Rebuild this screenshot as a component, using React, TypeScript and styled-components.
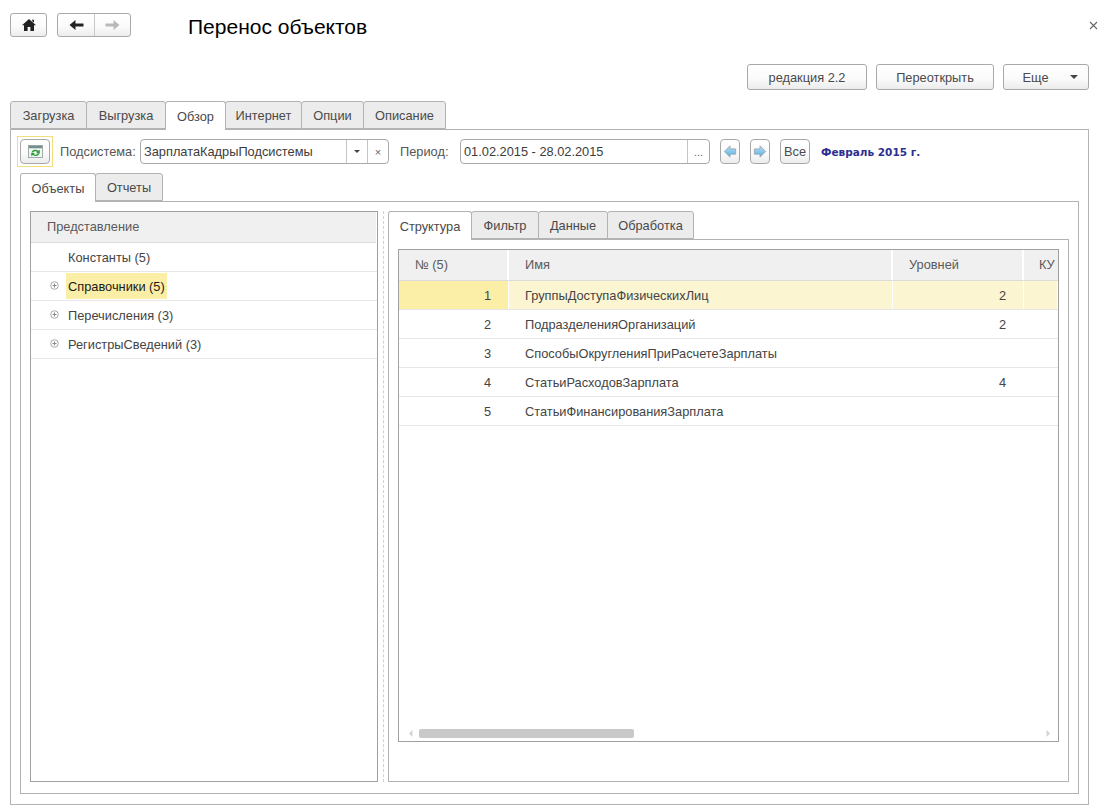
import React from "react";
import styled, { createGlobalStyle } from "styled-components";

const Global = createGlobalStyle`
  html, body { margin: 0; padding: 0; background: #fff; }
  body { font-family: "Liberation Sans", Arial, sans-serif; font-size: 12.8px; color: #4a4a4a; }
  * { box-sizing: border-box; }
`;

const Page = styled.div`
  width: 1105px;
  height: 812px;
  padding: 13px 16px 0 10px;
  display: flex;
  flex-direction: column;
  overflow: hidden;
`;
const TopBar = styled.div`
  display: flex;
  align-items: center;
  height: 24px;
  margin-right: -10px;
`;
const buttonSkin = `
  background: linear-gradient(#ffffff, #fbfbfb 55%, #ececec);
  border: 1px solid #a9a9a9;
  border-radius: 3px;
`;
const NavGroup = styled.div<{ $ml?: number }>`
  ${buttonSkin}
  display: flex;
  height: 24px;
  margin-left: ${(p) => p.$ml ?? 0}px;
`;
const NavCell = styled.div<{ $w: number; $divided?: boolean }>`
  width: ${(p) => p.$w}px;
  display: flex;
  align-items: center;
  justify-content: center;
  border-left: ${(p) => (p.$divided ? "1px solid #c9c9c9" : "none")};
`;
const Title = styled.h1`
  margin: 3px 0 0 57px;
  font-size: 21px;
  font-weight: 400;
  color: #000;
  line-height: 28px;
`;
const Close = styled.div`
  margin-left: auto;
  width: 11px;
  height: 11px;
  display: flex;
  align-items: center;
  justify-content: center;
  margin-top: 1px;
`;
const ActionBar = styled.div`
  display: flex;
  justify-content: flex-end;
  gap: 9px;
  margin-top: 27px;
  height: 26px;
`;
const ActionButton = styled.div<{ $w: number }>`
  ${buttonSkin}
  width: ${(p) => p.$w}px;
  height: 26px;
  display: flex;
  align-items: center;
  justify-content: center;
  color: #4a4a4a;
  gap: 21px;
`;
const Caret = styled.span`
  width: 0;
  height: 0;
  border-left: 4px solid transparent;
  border-right: 4px solid transparent;
  border-top: 4px solid #444;
  margin-right: -8px;
`;
const TabRow = styled.div<{ $mt?: number; $h: number }>`
  display: flex;
  height: ${(p) => p.$h}px;
  margin-top: ${(p) => p.$mt ?? 0}px;
  flex: none;
`;
const Tab = styled.div<{ $w: number; $active?: boolean }>`
  width: ${(p) => p.$w}px;
  margin-right: -1px;
  height: ${(p) => (p.$active ? "calc(100% + 1px)" : "100%")};
  display: flex;
  align-items: center;
  justify-content: center;
  background: ${(p) => (p.$active ? "#fff" : "#ececec")};
  border: 1px solid #b3b3b3;
  border-bottom: ${(p) => (p.$active ? "none" : "1px solid #b3b3b3")};
  border-radius: 3px 3px 0 0;
  color: #4a4a4a;
  position: relative;
  z-index: ${(p) => (p.$active ? 2 : 1)};
`;
const Panel = styled.div<{ $h: number; $pad: string }>`
  height: ${(p) => p.$h}px;
  padding: ${(p) => p.$pad};
  border: 1px solid #b3b3b3;
  background: #fff;
  display: flex;
  flex-direction: column;
  flex: none;
`;
const Toolbar = styled.div`
  display: flex;
  align-items: center;
  height: 31px;
  margin-left: -3px;
  flex: none;
`;
const Focus = styled.div`
  width: 36px;
  height: 31px;
  border: 1px solid #f3de7c;
  display: flex;
  align-items: center;
  justify-content: center;
`;
const IconButton = styled.div<{ $w: number; $ml?: number }>`
  ${buttonSkin}
  border-radius: 4px;
  width: ${(p) => p.$w}px;
  height: 25px;
  margin-left: ${(p) => p.$ml ?? 0}px;
  display: flex;
  align-items: center;
  justify-content: center;
  color: #4a4a4a;
  flex: none;
`;
const Label = styled.span<{ $ml: number; $w: number }>`
  margin-left: ${(p) => p.$ml}px;
  width: ${(p) => p.$w}px;
  flex: none;
  color: #555;
  white-space: nowrap;
`;
const Field = styled.div<{ $w: number }>`
  width: ${(p) => p.$w}px;
  height: 25px;
  border: 1px solid #a9a9a9;
  border-radius: 4px;
  display: flex;
  align-items: stretch;
  background: #fff;
  flex: none;
`;
const FieldValue = styled.div`
  flex: 1;
  display: flex;
  align-items: center;
  padding-left: 3px;
  color: #3c3c3c;
  white-space: nowrap;
`;
const FieldCell = styled.div<{ $w: number }>`
  width: ${(p) => p.$w}px;
  flex: none;
  border-left: 1px solid #c4c4c4;
  display: flex;
  align-items: center;
  justify-content: center;
  color: #666;
  font-size: 11px;
`;
const SmallCaret = styled.span`
  width: 0;
  height: 0;
  border-left: 3px solid transparent;
  border-right: 3px solid transparent;
  border-top: 3px solid #444;
`;
const Period = styled.span`
  margin-left: 11px;
  font-family: "DejaVu Sans", sans-serif;
  font-size: 10.5px;
  font-weight: 700;
  color: #2f2f8f;
  white-space: nowrap;
`;
const Split = styled.div`
  display: flex;
  flex: 1;
  min-height: 0;
`;
const TreeTable = styled.div`
  width: 348px;
  flex: none;
  border: 1px solid #a0a0a0;
  background: #fff;
`;
const TreeHead = styled.div`
  height: 31px;
  margin-right: 1px;
  padding: 0 0 2px 16px;
  background: #f0f0f0;
  border-bottom: 1px solid #dcdcdc;
  box-shadow: 0 1px 0 #fff;
  display: flex;
  align-items: center;
  color: #5a5a5a;
`;
const TreeRow = styled.div`
  height: 29px;
  border-bottom: 1px solid #e6e6e6;
  display: flex;
  align-items: center;
  position: relative;
  padding-left: 35px;
  color: #444;
`;
const Expander = styled.svg`
  position: absolute;
  left: 19px;
  top: 9px;
`;
const TreeText = styled.span<{ $current?: boolean }>`
  height: 26px;
  display: flex;
  align-items: center;
  padding: 0 2px;
  background: ${(p) => (p.$current ? "#fbeea6" : "transparent")};
  color: ${(p) => (p.$current ? "#1a1a1a" : "#444")};
`;
const Splitter = styled.div`
  width: 10px;
  flex: none;
  display: flex;
  justify-content: center;
`;
const DashLine = styled.div`
  width: 0;
  height: 100%;
  border-left: 1px dashed #d2d2d2;
  margin-left: 1px;
`;
const RightPane = styled.div`
  flex: 1;
  display: flex;
  flex-direction: column;
  min-width: 0;
`;
const DataTable = styled.div`
  flex: 1;
  border: 1px solid #a0a0a0;
  display: flex;
  flex-direction: column;
  overflow: hidden;
`;
const Columns = "110px 384px 131px 1fr";
const HeadRow = styled.div`
  display: grid;
  grid-template-columns: ${Columns};
  height: 31px;
  border-bottom: 1px solid #dcdcdc;
  flex: none;
`;
const HeadCell = styled.div`
  background: #f0f0f0;
  border-right: 2px solid #fff;
  display: flex;
  align-items: center;
  padding: 0 0 2px 16px;
  color: #5a5a5a;
  white-space: nowrap;
  overflow: hidden;
  &:last-child { border-right: none; padding-left: 15px; }
`;
const Row = styled.div<{ $selected?: boolean }>`
  display: grid;
  grid-template-columns: ${Columns};
  height: 29px;
  flex: none;
  border-bottom: 1px solid #e6e6e6;
  background: ${(p) => (p.$selected ? "#fcf5d2" : "#fff")};
`;
const Cell = styled.div<{ $right?: boolean; $current?: boolean }>`
  display: flex;
  align-items: center;
  justify-content: ${(p) => (p.$right ? "flex-end" : "flex-start")};
  padding: ${(p) => (p.$right ? "0 17px 0 0" : "0 0 0 16px")};
  background: ${(p) => (p.$current ? "#fbeea6" : "transparent")};
  border-right: 1px solid #fff;
  color: #444;
  white-space: nowrap;
`;
const RowsArea = styled.div`
  flex: 1;
  display: flex;
  flex-direction: column;
`;
const Scrollbar = styled.div`
  height: 13px;
  flex: none;
  display: flex;
  align-items: flex-start;
  padding-top: 1px;
`;
const ScrollArrow = styled.svg<{ $left: number }>`
  margin-left: ${(p) => p.$left}px;
  margin-top: 1px;
  flex: none;
`;
const Thumb = styled.div`
  width: 215px;
  height: 9px;
  margin-left: 6px;
  background: #c9c9c9;
  border-radius: 2px;
  flex: none;
`;

const ArrowIcon = ({ dir }: { dir: "left" | "right" }) => (
  <svg width="14" height="15" viewBox="0 0 16 16" style={dir === "right" ? { transform: "scaleX(-1)" } : undefined}>
    <defs>
      <linearGradient id={"blue" + dir} x1="0" y1="0" x2="0" y2="1">
        <stop offset="0" stopColor="#b4e0f6" />
        <stop offset="1" stopColor="#58aee0" />
      </linearGradient>
    </defs>
    <path d="M1.5 8 L8 1.5 V5 H14.5 V11 H8 V14.5 Z" fill={`url(#blue${dir})`} stroke="#9aa7b0" strokeWidth="1" strokeLinejoin="round" />
  </svg>
);

const tree = [
  { text: "Константы (5)", exp: false },
  { text: "Справочники (5)", exp: true, current: true },
  { text: "Перечисления (3)", exp: true },
  { text: "РегистрыСведений (3)", exp: true },
];
const rows = [
  { n: 1, name: "ГруппыДоступаФизическихЛиц", lv: "2" },
  { n: 2, name: "ПодразделенияОрганизаций", lv: "2" },
  { n: 3, name: "СпособыОкругленияПриРасчетеЗарплаты", lv: "" },
  { n: 4, name: "СтатьиРасходовЗарплата", lv: "4" },
  { n: 5, name: "СтатьиФинансированияЗарплата", lv: "" },
];

export default function App() {
  return (
    <Page>
      <Global />
      <TopBar>
        <NavGroup>
          <NavCell $w={35}>
            <svg width="14" height="12" viewBox="0 0 14 12">
              <path d="M7 0 L14 6.2 H12 V12 H8.4 V8 H5.6 V12 H2 V6.2 H0 Z M10.2 0.8 H12 V3.6 L10.2 2.2 Z" fill="#222" />
            </svg>
          </NavCell>
        </NavGroup>
        <NavGroup $ml={10}>
          <NavCell $w={36}>
            <svg width="15" height="12" viewBox="0 0 15 12">
              <path d="M0.5 6 L6.5 1 V4.5 H14.5 V7.5 H6.5 V11 Z" fill="#222" />
            </svg>
          </NavCell>
          <NavCell $w={36} $divided>
            <svg width="15" height="12" viewBox="0 0 15 12">
              <path d="M14.5 6 L8.5 1 V4.5 H0.5 V7.5 H8.5 V11 Z" fill="#b9b9b9" />
            </svg>
          </NavCell>
        </NavGroup>
        <Title>Перенос объектов</Title>
        <Close>
          <svg width="9" height="9" viewBox="0 0 9 9">
            <path d="M1 1 L8 8 M8 1 L1 8" stroke="#666" strokeWidth="1.1" />
          </svg>
        </Close>
      </TopBar>
      <ActionBar>
        <ActionButton $w={120}>редакция 2.2</ActionButton>
        <ActionButton $w={118}>Переоткрыть</ActionButton>
        <ActionButton $w={86}>
          Еще
          <Caret />
        </ActionButton>
      </ActionBar>
      <TabRow $mt={11} $h={28}>
        <Tab $w={77}>Загрузка</Tab>
        <Tab $w={80}>Выгрузка</Tab>
        <Tab $w={61} $active>Обзор</Tab>
        <Tab $w={77}>Интернет</Tab>
        <Tab $w={63}>Опции</Tab>
        <Tab $w={83}>Описание</Tab>
      </TabRow>
      <Panel $h={676} $pad="6px 9px 10px 9px">
        <Toolbar>
          <Focus>
            <IconButton $w={30}>
              <svg width="15" height="13" viewBox="0 0 16 14">
                <rect x="0.5" y="0.5" width="15" height="13" fill="#f2f6f4" stroke="#9aa5a2" />
                <rect x="1" y="1" width="14" height="2.5" fill="#6f8f8c" />
                <path d="M3.6 8 A4.4 3.8 0 0 1 11 6.2 L12.6 5 V9 H8.6 L10 7.6 A2.8 2.4 0 0 0 5.4 8 Z" fill="#2f9a3a" />
                <path d="M12.4 9 A4.4 3.8 0 0 1 5 10.8 L3.4 12 V8.6 H7.4 L6 9.8 A2.8 2.4 0 0 0 10.6 9 Z" fill="#2f9a3a" />
              </svg>
            </IconButton>
          </Focus>
          <Label $ml={7} $w={80}>Подсистема:</Label>
          <Field $w={249}>
            <FieldValue>ЗарплатаКадрыПодсистемы</FieldValue>
            <FieldCell $w={21}><SmallCaret /></FieldCell>
            <FieldCell $w={21}>×</FieldCell>
          </Field>
          <Label $ml={11} $w={60}>Период:</Label>
          <Field $w={250}>
            <FieldValue>01.02.2015 - 28.02.2015</FieldValue>
            <FieldCell $w={22}>...</FieldCell>
          </Field>
          <IconButton $w={20} $ml={10}><ArrowIcon dir="left" /></IconButton>
          <IconButton $w={20} $ml={10}><ArrowIcon dir="right" /></IconButton>
          <IconButton $w={30} $ml={10}>Все</IconButton>
          <Period>Февраль 2015 г.</Period>
        </Toolbar>
        <TabRow $mt={6} $h={28}>
          <Tab $w={76} $active>Объекты</Tab>
          <Tab $w={68}>Отчеты</Tab>
        </TabRow>
        <Panel $h={593} $pad="9px 9px 11px 9px">
          <Split>
            <TreeTable>
              <TreeHead>Представление</TreeHead>
              {tree.map((t) => (
                <TreeRow key={t.text}>
                  {t.exp && (
                    <Expander width="9" height="9" viewBox="0 0 9 9">
                      <circle cx="4.5" cy="4.5" r="3.8" fill="none" stroke="#a8a8a8" />
                      <path d="M2.5 4.5 H6.5 M4.5 2.5 V6.5" stroke="#8a8a8a" />
                    </Expander>
                  )}
                  <TreeText $current={t.current}>{t.text}</TreeText>
                </TreeRow>
              ))}
            </TreeTable>
            <Splitter><DashLine /></Splitter>
            <RightPane>
              <TabRow $h={28}>
                <Tab $w={84} $active>Структура</Tab>
                <Tab $w={68}>Фильтр</Tab>
                <Tab $w={70}>Данные</Tab>
                <Tab $w={87}>Обработка</Tab>
              </TabRow>
              <Panel $h={543} $pad="9px 9px 39px 9px">
                <DataTable>
                  <HeadRow>
                    <HeadCell>№ (5)</HeadCell>
                    <HeadCell>Имя</HeadCell>
                    <HeadCell>Уровней</HeadCell>
                    <HeadCell>КУ</HeadCell>
                  </HeadRow>
                  <RowsArea>
                    {rows.map((r, i) => (
                      <Row key={r.n} $selected={i === 0}>
                        <Cell $right $current={i === 0}>{r.n}</Cell>
                        <Cell>{r.name}</Cell>
                        <Cell $right>{r.lv}</Cell>
                        <Cell />
                      </Row>
                    ))}
                  </RowsArea>
                  <Scrollbar>
                    <ScrollArrow $left={10} width="4" height="7" viewBox="0 0 4 7">
                      <path d="M3.5 0 L0 3.5 L3.5 7 Z" fill="#d4d4d4" />
                    </ScrollArrow>
                    <Thumb />
                    <ScrollArrow $left={412} width="4" height="7" viewBox="0 0 4 7">
                      <path d="M0.5 0 L4 3.5 L0.5 7 Z" fill="#d4d4d4" />
                    </ScrollArrow>
                  </Scrollbar>
                </DataTable>
              </Panel>
            </RightPane>
          </Split>
        </Panel>
      </Panel>
    </Page>
  );
}
